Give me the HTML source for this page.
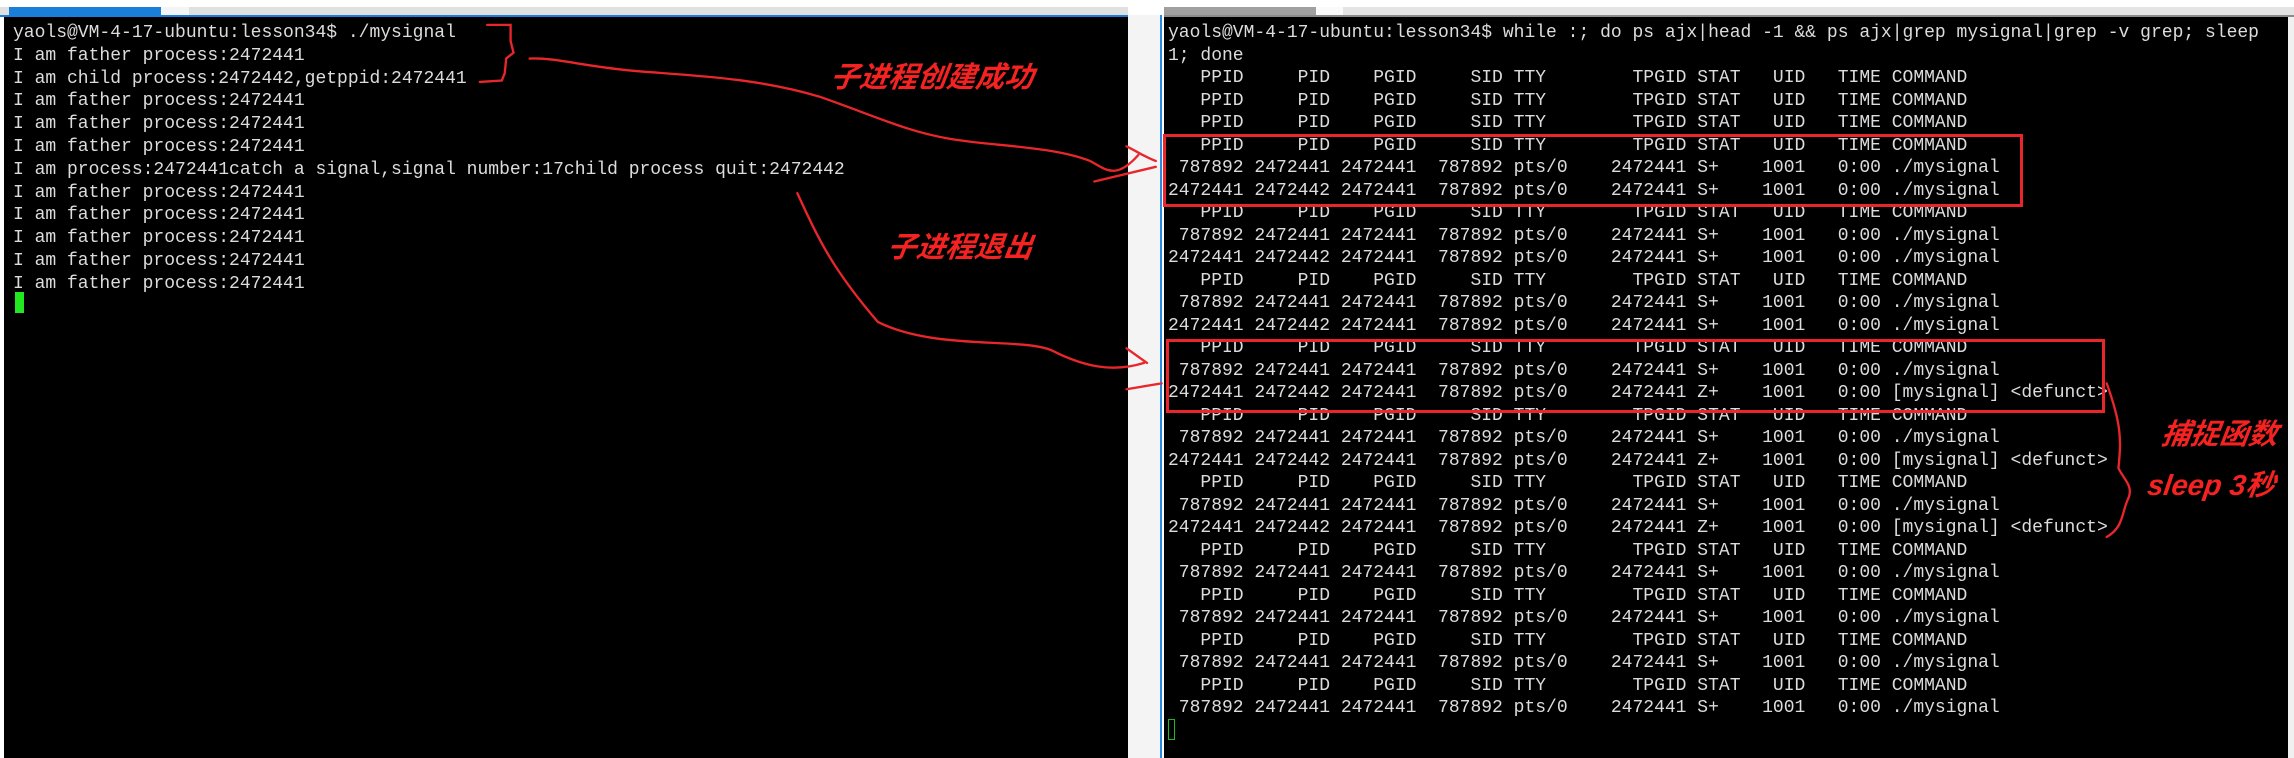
<!DOCTYPE html>
<html><head><meta charset="utf-8">
<style>
html,body{margin:0;padding:0;width:2294px;height:758px;overflow:hidden;background:#fff;position:relative}
.term{position:absolute;top:17px;bottom:0;background:#000}
pre{position:absolute;margin:0;font-family:"Liberation Mono",monospace;font-size:18px;color:#dcdcdc;white-space:pre}
.note{position:absolute;font-family:"Liberation Sans","Noto Sans CJK SC",sans-serif;font-weight:bold;font-style:italic;color:#f52222;font-size:29px;white-space:nowrap;transform:skewX(-8deg)}
.box{position:absolute;border:3px solid #e8262b}
</style></head><body>
<div style="position:absolute;left:0;top:7px;width:1128px;height:8px;background:#e0e0e0"></div>
<div style="position:absolute;left:9px;top:7px;width:152px;height:8px;background:#1a7fd8"></div>
<div style="position:absolute;left:161px;top:7px;width:28px;height:8px;background:#f4f4f4"></div>
<div style="position:absolute;left:0;top:15px;width:1128px;height:2px;background:#1a7fd8"></div>
<div style="position:absolute;left:1164px;top:7px;width:1130px;height:8px;background:#e4e4e4"></div>
<div style="position:absolute;left:1164px;top:7px;width:152px;height:8px;background:#a0a0a0"></div>
<div style="position:absolute;left:1316px;top:7px;width:27px;height:8px;background:#fafafa"></div>
<div style="position:absolute;left:1164px;top:15px;width:1130px;height:2px;background:#8a8a8a"></div>
<div style="position:absolute;left:1128px;top:15px;width:32px;height:743px;background:#f4f4f4"></div>
<div style="position:absolute;left:1160px;top:15px;width:2px;height:743px;background:#2b8ae0"></div>
<div style="position:absolute;left:2288px;top:17px;width:6px;height:741px;background:#f0f0f0"></div>

<div class="term" style="left:4px;width:1124px"></div>
<div class="term" style="left:1164px;width:1124px"></div>

<pre style="left:13px;top:22px;line-height:22.8px">yaols@VM-4-17-ubuntu:lesson34$ ./mysignal
I am father process:2472441
I am child process:2472442,getppid:2472441
I am father process:2472441
I am father process:2472441
I am father process:2472441
I am process:2472441catch a signal,signal number:17child process quit:2472442
I am father process:2472441
I am father process:2472441
I am father process:2472441
I am father process:2472441
I am father process:2472441</pre>
<div style="position:absolute;left:15px;top:292px;width:9px;height:21px;background:#22e822"></div>

<pre style="left:1168px;top:22px;line-height:22.5px">yaols@VM-4-17-ubuntu:lesson34$ while :; do ps ajx|head -1 &amp;&amp; ps ajx|grep mysignal|grep -v grep; sleep
1; done
   PPID     PID    PGID     SID TTY        TPGID STAT   UID   TIME COMMAND
   PPID     PID    PGID     SID TTY        TPGID STAT   UID   TIME COMMAND
   PPID     PID    PGID     SID TTY        TPGID STAT   UID   TIME COMMAND
   PPID     PID    PGID     SID TTY        TPGID STAT   UID   TIME COMMAND
 787892 2472441 2472441  787892 pts/0    2472441 S+    1001   0:00 ./mysignal
2472441 2472442 2472441  787892 pts/0    2472441 S+    1001   0:00 ./mysignal
   PPID     PID    PGID     SID TTY        TPGID STAT   UID   TIME COMMAND
 787892 2472441 2472441  787892 pts/0    2472441 S+    1001   0:00 ./mysignal
2472441 2472442 2472441  787892 pts/0    2472441 S+    1001   0:00 ./mysignal
   PPID     PID    PGID     SID TTY        TPGID STAT   UID   TIME COMMAND
 787892 2472441 2472441  787892 pts/0    2472441 S+    1001   0:00 ./mysignal
2472441 2472442 2472441  787892 pts/0    2472441 S+    1001   0:00 ./mysignal
   PPID     PID    PGID     SID TTY        TPGID STAT   UID   TIME COMMAND
 787892 2472441 2472441  787892 pts/0    2472441 S+    1001   0:00 ./mysignal
2472441 2472442 2472441  787892 pts/0    2472441 Z+    1001   0:00 [mysignal] &lt;defunct&gt;
   PPID     PID    PGID     SID TTY        TPGID STAT   UID   TIME COMMAND
 787892 2472441 2472441  787892 pts/0    2472441 S+    1001   0:00 ./mysignal
2472441 2472442 2472441  787892 pts/0    2472441 Z+    1001   0:00 [mysignal] &lt;defunct&gt;
   PPID     PID    PGID     SID TTY        TPGID STAT   UID   TIME COMMAND
 787892 2472441 2472441  787892 pts/0    2472441 S+    1001   0:00 ./mysignal
2472441 2472442 2472441  787892 pts/0    2472441 Z+    1001   0:00 [mysignal] &lt;defunct&gt;
   PPID     PID    PGID     SID TTY        TPGID STAT   UID   TIME COMMAND
 787892 2472441 2472441  787892 pts/0    2472441 S+    1001   0:00 ./mysignal
   PPID     PID    PGID     SID TTY        TPGID STAT   UID   TIME COMMAND
 787892 2472441 2472441  787892 pts/0    2472441 S+    1001   0:00 ./mysignal
   PPID     PID    PGID     SID TTY        TPGID STAT   UID   TIME COMMAND
 787892 2472441 2472441  787892 pts/0    2472441 S+    1001   0:00 ./mysignal
   PPID     PID    PGID     SID TTY        TPGID STAT   UID   TIME COMMAND
 787892 2472441 2472441  787892 pts/0    2472441 S+    1001   0:00 ./mysignal</pre>
<div style="position:absolute;left:1168px;top:719px;width:7px;height:21px;border:1px solid #1fb81f;box-sizing:border-box"></div>

<div class="box" style="left:1163px;top:134px;width:854px;height:67px"></div>
<div class="box" style="left:1166px;top:339px;width:933px;height:68px"></div>

<div class="note" style="left:831px;top:54px">子进程创建成功</div>
<div class="note" style="left:888px;top:224px">子进程退出</div>
<div class="note" style="left:2162px;top:411px">捕捉函数</div>
<div class="note" style="left:2148px;top:462px">sleep 3秒</div>

<svg style="position:absolute;left:0;top:0" width="2294" height="758" viewBox="0 0 1568 518" preserveAspectRatio="none">
<g fill="none" stroke="#e8262b" stroke-width="1.6" stroke-linecap="round">
<path d="M333,17 L349,17 L349,28 L351,36 L346,40 L345,50 L343,55 L328,56"/>
<path d="M362,40 C380,39 400,46 440,49 C480,52 520,54 560,66 C600,80 620,90 650,95 C680,100 720,100 745,110 C755,115 762,124 778,106"/>
<path d="M748,124 L790,114"/>
<path d="M770,100 C778,104 784,108 790,110"/>
<path d="M545,132 C560,165 570,185 600,220 C640,240 700,230 720,240 C740,250 760,255 782,248"/>
<path d="M770,238 L784,248"/>
<path d="M770,266 L794,262"/>
<path d="M1440,262 C1450,290 1450,300 1448,320 C1452,328 1458,332 1455,340 C1450,350 1452,360 1440,367"/>
</g>
</svg>
</body></html>
